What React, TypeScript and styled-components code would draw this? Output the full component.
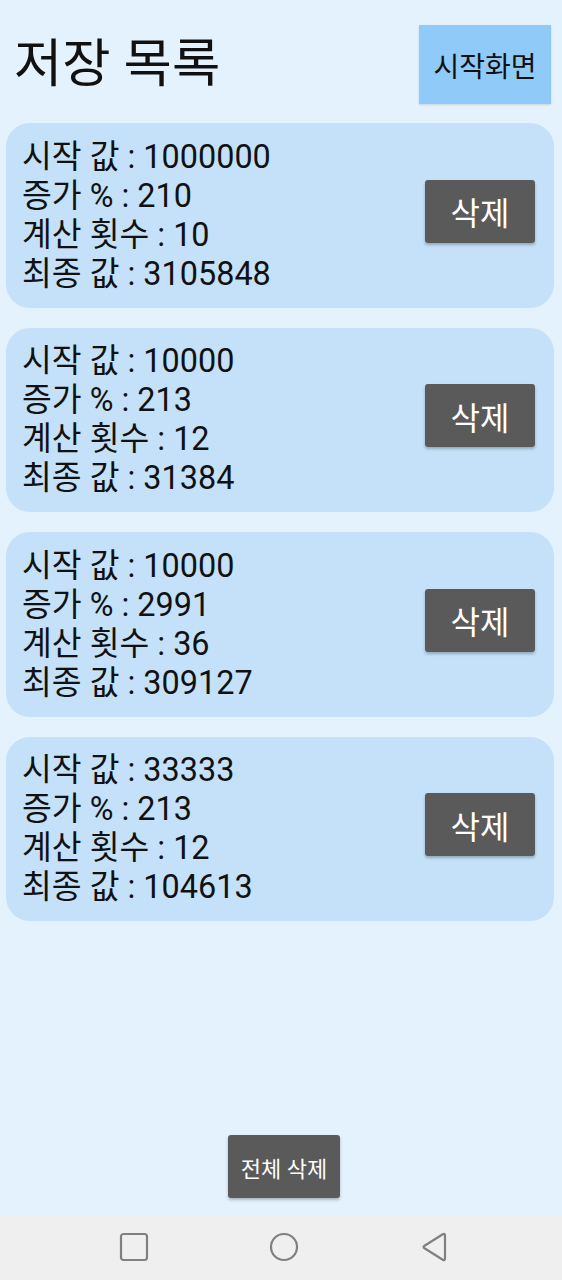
import React from "react";
import styled, { createGlobalStyle } from "styled-components";

const Global = createGlobalStyle`
  html, body { margin: 0; padding: 0; }
  body { background: #E3F2FD; font-family: Roboto, "Noto Sans CJK KR", sans-serif; }
`;

const Screen = styled.div`
  width: 562px;
  height: 1280px;
  display: flex;
  flex-direction: column;
  background: #E3F2FD;
  overflow: hidden;
`;

const Main = styled.div`
  flex: 1;
  display: flex;
  flex-direction: column;
  padding-bottom: 17px;
`;

const Header = styled.div`
  display: flex;
  align-items: center;
  justify-content: space-between;
  padding: 25px 11px 0 14px;
  margin-bottom: 19px;
`;

const Title = styled.h1`
  margin: 0;
  font-family: Roboto, "Noto Sans CJK KR", sans-serif;
  font-weight: 400;
  font-size: 52.5px;
  color: #111;
  line-height: 1;
`;

const HomeButton = styled.button`
  width: 132px;
  height: 79px;
  border: none;
  background: #90CAF9;
  box-shadow: 0 1px 2px rgba(0, 0, 0, 0.12);
  font-family: Roboto, "Noto Sans CJK KR", sans-serif;
  font-size: 28px;
  color: #111;
  padding: 0;
`;

const List = styled.div`
  display: flex;
  flex-direction: column;
  gap: 20px;
  margin: 0 8px 0 6px;
`;

const Card = styled.div`
  height: 184.5px;
  box-sizing: border-box;
  background: #C4E1F9;
  border-radius: 24px;
  display: flex;
  align-items: center;
  justify-content: space-between;
  padding: 0 19px 0 16px;
`;

const Info = styled.div`
  display: flex;
  flex-direction: column;
  font-family: Roboto, "Noto Sans CJK KR", sans-serif;
  font-size: 32.4px;
  line-height: 39px;
  color: #111;
  margin-top: 1px;
`;

const DeleteButton = styled.button<{ $w?: number; $h?: number; $fs?: number; $lift?: number }>`
  width: ${(p) => p.$w ?? 110}px;
  height: ${(p) => p.$h ?? 63}px;
  margin-bottom: ${(p) => p.$lift ?? 0}px;
  border: none;
  border-radius: 3px;
  background: #5A5A5A;
  color: #fff;
  font-family: Roboto, "Noto Sans CJK KR", sans-serif;
  font-size: ${(p) => p.$fs ?? 32}px;
  padding: 0;
  box-shadow: 0 2px 3px rgba(0, 0, 0, 0.25);
`;

const Spacer = styled.div`
  flex: 1;
`;

const Bottom = styled.div`
  display: flex;
  justify-content: center;
  padding-left: 6px;
`;

const NavBar = styled.div`
  height: 65px;
  background: #EFEFEF;
  display: flex;
  align-items: center;
  justify-content: center;
  gap: 110px;
  padding: 0 0 2px 6px;
  box-sizing: border-box;
`;

const NavIcon = styled.svg`
  width: 40px;
  height: 40px;
  stroke: #808080;
  fill: none;
  stroke-width: 2.2;
`;

const items = [
  { start: "1000000", inc: "210", count: "10", fin: "3105848" },
  { start: "10000", inc: "213", count: "12", fin: "31384" },
  { start: "10000", inc: "2991", count: "36", fin: "309127" },
  { start: "33333", inc: "213", count: "12", fin: "104613" },
];

export default function App() {
  return (
    <Screen>
      <Global />
      <Main>
        <Header>
          <Title>저장 목록</Title>
          <HomeButton>시작화면</HomeButton>
        </Header>
        <List>
          {items.map((it, i) => (
            <Card key={i}>
              <Info>
                <span>시작 값 : {it.start}</span>
                <span>증가 % : {it.inc}</span>
                <span>계산 횟수 : {it.count}</span>
                <span>최종 값 : {it.fin}</span>
              </Info>
              <DeleteButton $lift={8}>삭제</DeleteButton>
            </Card>
          ))}
        </List>
        <Spacer />
        <Bottom>
          <DeleteButton $w={112} $h={63} $fs={22}>전체 삭제</DeleteButton>
        </Bottom>
      </Main>
      <NavBar>
        <NavIcon viewBox="0 0 40 40">
          <rect x="7" y="7" width="26" height="26" rx="2.5" />
        </NavIcon>
        <NavIcon viewBox="0 0 40 40">
          <circle cx="20" cy="20" r="13" />
        </NavIcon>
        <NavIcon viewBox="0 0 40 40">
          <path d="M31 8.5 L31 31.5 Q31 34 28.8 32.7 L10.5 21.3 Q8.6 20 10.5 18.7 L28.8 7.3 Q31 6 31 8.5 Z" />
        </NavIcon>
      </NavBar>
    </Screen>
  );
}
